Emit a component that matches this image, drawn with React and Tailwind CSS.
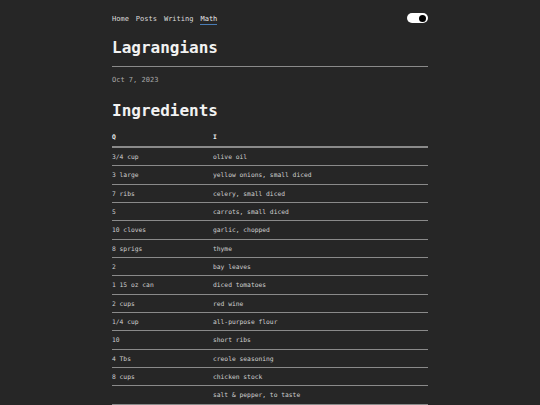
import React, { useState } from 'react';

const ingredients = [
    ['3/4 cup', 'olive oil'],
    ['3 large', 'yellow onions, small diced'],
    ['7 ribs', 'celery, small diced'],
    ['5', 'carrots, small diced'],
    ['10 cloves', 'garlic, chopped'],
    ['8 sprigs', 'thyme'],
    ['2', 'bay leaves'],
    ['1 15 oz can', 'diced tomatoes'],
    ['2 cups', 'red wine'],
    ['1/4 cup', 'all-purpose flour'],
    ['10', 'short ribs'],
    ['4 Tbs', 'creole seasoning'],
    ['8 cups', 'chicken stock'],
    ['', 'salt & pepper, to taste'],
];

const links = ['Home', 'Posts', 'Writing', 'Math'];

const App = () => {
    const [dark, setDark] = useState(true);

    return (
        <div className="min-h-[405px] bg-[#262626] font-['DejaVu_Sans_Mono',monospace] text-[#e6e6e6]">
            <div className="mx-auto w-[316px] pt-[13px]">
                {/* Nav */}
                <div className="flex h-[10px] items-center justify-between">
                    <nav className="mt-[2px] flex gap-[7px] text-[7px] leading-[10px]">
                        {links.map((link) => (
                            <a
                                key={link}
                                href="#"
                                className={link === 'Math' ? 'border-b border-[#4a7db5] text-[#e6e6e6]' : 'text-[#dcdcdc]'}
                            >
                                {link}
                            </a>
                        ))}
                    </nav>
                    <button
                        onClick={() => setDark(!dark)}
                        className="flex h-[10px] w-[21px] items-center justify-end rounded-full bg-white px-[2px]"
                    >
                        <span className="h-[7px] w-[7px] rounded-full bg-black" />
                    </button>
                </div>

                {/* Title */}
                <h1 className="mt-[15px] text-[16px] font-bold leading-[20px] text-[#f2f2f2]">Lagrangians</h1>
                <hr className="mt-[8px] border-0 border-t border-[#8a8a8a]" />
                <p className="mt-[8px] text-[7px] leading-[10px] text-[#a8a8a8]">Oct 7, 2023</p>

                {/* Ingredients */}
                <h2 className="mt-[16px] text-[16px] font-bold leading-[20px] text-[#f2f2f2]">Ingredients</h2>
                <div className="mt-[7px] text-[6.3px]">
                    <div className="grid h-[20px] grid-cols-[101px_1fr] items-center border-b-2 border-[#8a8a8a] font-bold text-[#f0f0f0]">
                        <span>Q</span>
                        <span>I</span>
                    </div>
                    {ingredients.map(([q, item], i) => (
                        <div key={i} className="grid h-[18.35px] grid-cols-[101px_1fr] items-center border-b border-[#8a8a8a] text-[#cfcfcf]">
                            <span>{q}</span>
                            <span>{item}</span>
                        </div>
                    ))}
                </div>
            </div>
        </div>
    );
};

export default App;
